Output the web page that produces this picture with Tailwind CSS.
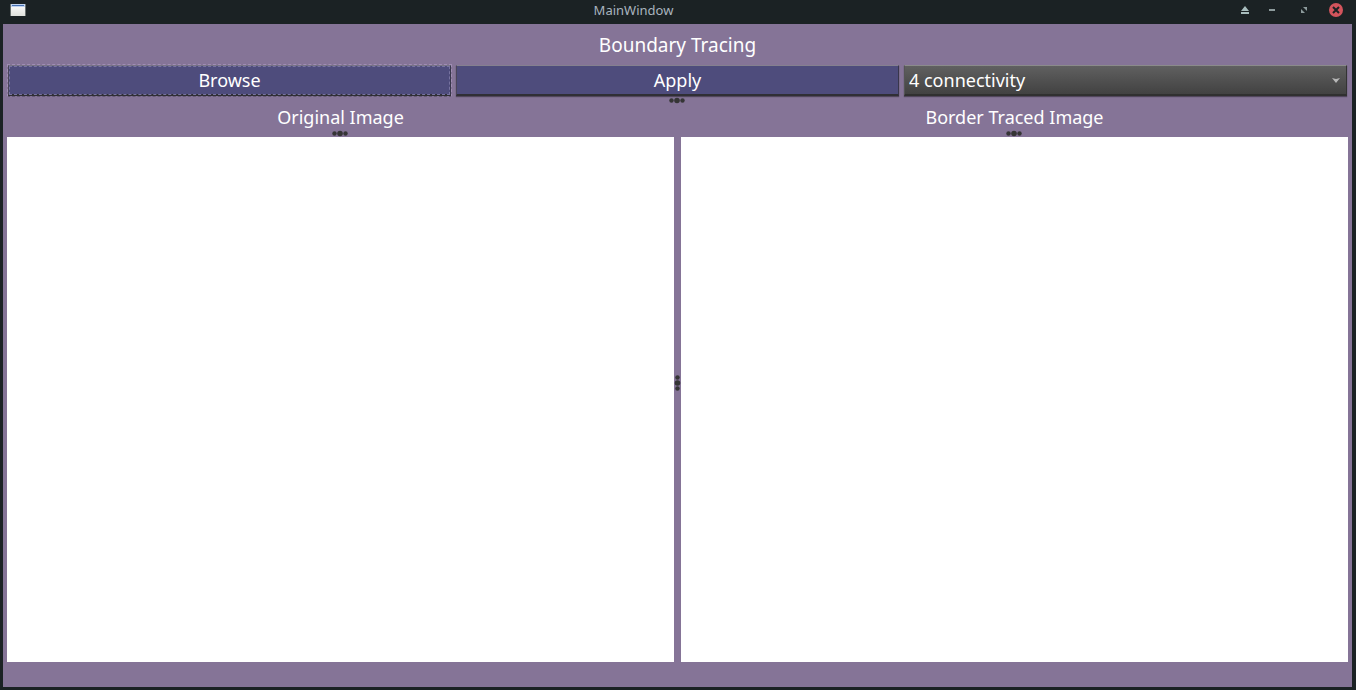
<!DOCTYPE html>
<html lang="en">
<head>
<meta charset="utf-8">
<title>MainWindow</title>
<script src="https://cdn.jsdelivr.net/npm/@tailwindcss/browser@4"></script>
</head>
<body class="flex h-screen flex-col overflow-hidden bg-[#1b2224] pr-1 pb-[3px] pl-[3px] font-['Noto_Sans',sans-serif] text-lg text-white">
  <header class="flex h-6 shrink-0 items-center pb-1">
    <svg class="ml-[7px] h-3 w-4" viewBox="0 0 16 12" aria-hidden="true">
      <defs><linearGradient id="page" x1="0" y1="0" x2="0" y2="1"><stop offset="0" stop-color="#fff"/><stop offset="1" stop-color="#dfe1dc"/></linearGradient></defs>
      <rect width="16" height="12" fill="#69706f"/>
      <rect x="1" width="14" height="12" fill="url(#page)"/>
      <rect x="1" width="14" height="3" fill="#c0d3ef"/>
      <rect x="2" y="1" width="12" height="1" fill="#4771b3"/>
    </svg>
    <h1 class="flex-1 text-center text-[13px] leading-5 text-[#a9b4bf]">MainWindow</h1>
    <div class="mr-[9px] flex items-center justify-end">
      <button type="button" aria-label="Keep above" class="mr-[19px]"><svg class="h-2 w-2" viewBox="0 0 8 8"><path d="M4 0L8 5H0ZM0 6H8V8H0Z" fill="#a8bdbd"/></svg></button>
      <button type="button" aria-label="Minimize" class="mr-[25px]"><svg class="h-2 w-2" viewBox="0 0 8 8"><path d="M1 3H7V5H1Z" fill="#8d9b9c"/></svg></button>
      <button type="button" aria-label="Maximize" class="mr-[22px]"><svg class="h-1.5 w-1.5" viewBox="0 0 6 6"><path d="M2 0H6V4ZM0 2L4 6H0Z" fill="#8d9b9c"/></svg></button>
      <button type="button" aria-label="Close"><svg class="size-3.5" viewBox="0 0 14 14"><circle cx="7" cy="7" r="7" fill="#d3545c"/><path d="M4 4L10 10M10 4L4 10" stroke="#1b2224" stroke-width="2"/></svg></button>
    </div>
  </header>
  <main class="flex min-h-0 flex-1 flex-col bg-[#857497] px-1 pb-[25px]">
    <h2 class="pt-2 pb-1.5 text-center text-[19px] leading-[26px]">Boundary Tracing</h2>
    <div class="grid grid-cols-3 gap-[3px]">
      <div class="border border-dashed border-[#a08db4] border-b-[#655976]">
        <button type="button" class="block h-[31px] w-full border border-t-[#777386] border-r-[#38364b] border-b-2 border-b-[#302f35] border-l-[#4a465a] bg-[#4e4c7c] leading-[28px] outline-1 -outline-offset-2 outline-dashed outline-[#7773a0]">Browse</button>
      </div>
      <div class="p-px">
        <button type="button" class="block h-[31px] w-full border border-t-[#85808f] border-r-[#38364b] border-b-2 border-b-[#302f35] border-l-[#4a465a] bg-[#4e4c7c] leading-[28px] shadow-[0_1px_1px_#51465c]">Apply</button>
      </div>
      <div class="relative p-px">
        <select aria-label="Connectivity" class="block h-[31px] w-full appearance-none border border-t-[#8b8b8b] border-r-[#333333] border-b-2 border-b-[#303030] border-l-[#555555] bg-linear-to-b from-[#606060] to-[#424242] pl-1 leading-[28px] shadow-[0_1px_1px_#51465c]"><option>4 connectivity</option><option>8 connectivity</option></select>
        <svg class="pointer-events-none absolute top-[14px] right-2 h-[5px] w-2" viewBox="0 0 8 5" aria-hidden="true"><path d="M0 0L4 1L8 0L4 5Z" fill="#b8b8b8"/></svg>
      </div>
    </div>
    <svg class="mx-auto h-[7px] w-[17px] shrink-0" viewBox="0 0 17 7" fill="#353535" aria-hidden="true"><circle cx="2.5" cy="3.5" r="2.2"/><circle cx="8" cy="3.5" r="2.8"/><circle cx="13.5" cy="3.5" r="2.2"/></svg>
    <div class="grid min-h-0 flex-1 grid-cols-[1fr_7px_1fr]">
      <section class="flex flex-col">
        <h3 class="text-center leading-[26px]">Original Image</h3>
        <svg class="mx-auto h-[7px] w-[17px] shrink-0" viewBox="0 0 17 7" fill="#353535" aria-hidden="true"><circle cx="2.5" cy="3.5" r="2.2"/><circle cx="8" cy="3.5" r="2.8"/><circle cx="13.5" cy="3.5" r="2.2"/></svg>
        <div class="flex-1 bg-white"></div>
      </section>
      <div class="flex items-center justify-center"><svg class="h-[17px] w-[7px]" viewBox="0 0 7 17" fill="#353535" aria-hidden="true"><circle cx="3.5" cy="2.5" r="2.2"/><circle cx="3.5" cy="8" r="2.8"/><circle cx="3.5" cy="13.5" r="2.2"/></svg></div>
      <section class="flex flex-col">
        <h3 class="text-center leading-[26px]">Border Traced Image</h3>
        <svg class="mx-auto h-[7px] w-[17px] shrink-0" viewBox="0 0 17 7" fill="#353535" aria-hidden="true"><circle cx="2.5" cy="3.5" r="2.2"/><circle cx="8" cy="3.5" r="2.8"/><circle cx="13.5" cy="3.5" r="2.2"/></svg>
        <div class="flex-1 bg-white"></div>
      </section>
    </div>
  </main>
</body>
</html>
